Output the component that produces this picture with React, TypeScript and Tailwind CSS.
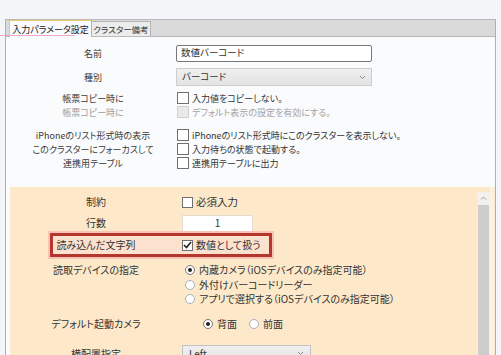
const Chevron = () => (
  <svg width="7" height="5" viewBox="0 0 7 5" className="shrink-0">
    <polyline points="1,1 3.5,3.5 6,1" fill="none" stroke="#8a8a8a" strokeWidth="1" />
  </svg>
);

function Box({ disabled = false, checked = false, size = 12 }: { disabled?: boolean; checked?: boolean; size?: number }) {
  return (
    <span
      className={
        "shrink-0 flex items-center justify-center border " +
        (disabled ? "bg-[#e9e9e9] border-[#cfcfcf]" : "bg-white border-[#6f6f6f]")
      }
      style={{ width: size, height: size }}
    >
      {checked && (
        <svg width="9" height="8" viewBox="0 0 9 8">
          <polyline points="1,4 3.5,6.5 8,1" fill="none" stroke="#222" strokeWidth="1.6" />
        </svg>
      )}
    </span>
  );
}

function Radio({ on = false }: { on?: boolean }) {
  return (
    <span
      className={
        "w-[10px] h-[10px] rounded-full border bg-white shrink-0 flex items-center justify-center " +
        (on ? "border-[#7a7a7a]" : "border-[#a9b1c0]")
      }
    >
      {on && <span className="w-[4px] h-[4px] rounded-full bg-[#222]" />}
    </span>
  );
}

function TopRow({ label, muted = false, children, className = "" }: { label: string; muted?: boolean; children: React.ReactNode; className?: string }) {
  return (
    <div className={"flex items-center shrink-0 " + className}>
      <div className={"ml-[4px] w-[166px] shrink-0 text-center whitespace-nowrap " + (muted ? "text-[#a0a0a0]" : "text-[#3a3a3a]")}>{label}</div>
      <div className="flex items-center">{children}</div>
    </div>
  );
}

function CheckLine({ text, disabled = false }: { text: string; disabled?: boolean }) {
  return (
    <div className="flex items-center gap-[3px] pl-[1px]">
      <Box disabled={disabled} />
      <span className={"whitespace-nowrap " + (disabled ? "text-[#a3a3a3]" : "text-[#333]")}>{text}</span>
    </div>
  );
}

function Label({ children }: { children: React.ReactNode }) {
  return <div className="w-[172px] shrink-0 text-center whitespace-nowrap">{children}</div>;
}

export default function App() {
  return (
    <div className="relative w-[501px] h-[355px] overflow-hidden bg-[#f3f5f9] pt-[19px] pl-[5px] font-['Noto_Sans_CJK_JP',sans-serif] [font-feature-settings:'palt'] leading-none">
      <div className="w-[491px] h-[340px] border-l border-r border-[#abb0b6] bg-[#fafbfd] flex flex-col">
        {/* tabs */}
        <div className="h-[18px] shrink-0 bg-[#dadada] border-t border-b border-[#b9b9b9] flex items-end pl-[3px]">
          <div className="h-[17px] -mb-px w-[83px] bg-[#fafbfd] border-t border-t-[#eccb63] border-r border-r-[#b3b3b3] border-l border-l-[#c9c9c9] text-[9px] text-[#222] flex items-center justify-center whitespace-nowrap">
            入力パラメータ設定
          </div>
          <div className="h-[15px] w-[59px] bg-[#ececec] border-t border-r border-[#b3b3b3] text-[8.5px] text-[#333] flex items-center justify-center whitespace-nowrap">
            クラスター備考
          </div>
        </div>

        {/* upper form */}
        <div className="text-[9px] flex flex-col">
          <TopRow label="名前" className="h-[20px] mt-[6px]">
            <div className="w-[196px] h-[17px] bg-white border border-[#777] rounded-[2px] flex items-center px-[4px] text-[9.5px] text-[#333]">
              数値バーコード
            </div>
          </TopRow>
          <TopRow label="種別" className="h-[22px] mt-[3px]">
            <div className="w-[196px] h-[18px] bg-gradient-to-b from-[#efefef] to-[#e3e3e3] border border-[#cdcdcd] flex items-center justify-between px-[5px] text-[9.5px] text-[#333]">
              <span>バーコード</span>
              <Chevron />
            </div>
          </TopRow>
          <TopRow label="帳票コピー時に" className="h-[14px] mt-[3px]">
            <CheckLine text="入力値をコピーしない。" />
          </TopRow>
          <TopRow label="帳票コピー時に" muted className="h-[14px]">
            <CheckLine text="デフォルト表示の設定を有効にする。" disabled />
          </TopRow>
          <TopRow label="iPhoneのリスト形式時の表示" className="h-[14px] mt-[9px]">
            <CheckLine text="iPhoneのリスト形式時にこのクラスターを表示しない。" />
          </TopRow>
          <TopRow label="このクラスターにフォーカスして" className="h-[14px]">
            <CheckLine text="入力待ちの状態で起動する。" />
          </TopRow>
          <TopRow label="連携用テーブル" className="h-[14px]">
            <CheckLine text="連携用テーブルに出力" />
          </TopRow>
        </div>

        {/* lower (highlighted) form */}
        <div className="ml-[4px] mt-[17px] flex-1 flex bg-[#fde9c9] text-[10px] text-[#333]">
          <div className="w-[467px] flex flex-col">
            <div className="h-[16px] mt-[7px] flex items-center">
              <Label>制約</Label>
              <div className="flex items-center gap-[3px]">
                <Box size={11} />
                <span className="text-[10.5px]">必須入力</span>
              </div>
            </div>
            <div className="h-[18px] mt-[4px] flex items-center">
              <Label>行数</Label>
              <div className="w-[71px] h-[17px] bg-white border border-[#e6dccd] flex items-center justify-center">1</div>
            </div>
            <div className="ml-[40px] mt-[1px] w-[222px] h-[24px] border-[3px] border-[#b3372c] bg-[#fde1cf] shadow-[0_0_0_2px_#f8c3b3] flex items-center">
              <div className="w-[86px] shrink-0 text-center whitespace-nowrap">読み込んだ文字列</div>
              <div className="ml-[43px] flex items-center gap-[3px]">
                <Box size={11} checked />
                <span className="whitespace-nowrap">数値として扱う</span>
              </div>
            </div>
            <div className="mt-[6px] flex">
              <div className="pt-[2px]">
                <Label>読取デバイスの指定</Label>
              </div>
              <div className="ml-[3px] flex flex-col">
                {[
                  ["内蔵カメラ（iOSデバイスのみ指定可能）", true],
                  ["外付けバーコードリーダー", false],
                  ["アプリで選択する（iOSデバイスのみ指定可能）", false],
                ].map(([t, on]) => (
                  <div key={t as string} className="h-[14.5px] flex items-center gap-[4px]">
                    <Radio on={on as boolean} />
                    <span className="whitespace-nowrap">{t as string}</span>
                  </div>
                ))}
              </div>
            </div>
            <div className="h-[16px] mt-[9px] flex items-center">
              <Label>デフォルト起動カメラ</Label>
              <div className="ml-[21px] flex items-center gap-[4px]">
                <Radio on />
                <span className="mr-[8px]">背面</span>
                <Radio />
                <span>前面</span>
              </div>
            </div>
            <div className="h-[18px] mt-[13px] flex items-center">
              <Label>横配置指定</Label>
              <div className="w-[129px] h-[18px] bg-gradient-to-b from-[#efefef] to-[#e3e3e3] border border-[#c3c3c3] flex items-center justify-between px-[6px]">
                <span>Left</span>
                <Chevron />
              </div>
            </div>
          </div>
          {/* scrollbar */}
          <div className="w-[13px] pt-[5px] flex flex-col">
            <div className="h-[12px] bg-[#f3f1ee] flex items-center justify-center">
              <svg width="7" height="4" viewBox="0 0 7 4">
                <polyline points="1,3.5 3.5,1 6,3.5" fill="none" stroke="#9a9a9a" strokeWidth="1" />
              </svg>
            </div>
            <div className="flex-1 bg-[#f2efea] px-[1px] pt-[1px]">
              <div className="h-full bg-[#cdcdcd]" />
            </div>
          </div>
          <div className="w-[4px] bg-[#fbf1e4]" />
        </div>
      </div>
      {/* stray pink guide line */}
      <div className="absolute left-0 top-[35px] w-[75px] h-px bg-[#f3a7c9]" />
    </div>
  );
}
